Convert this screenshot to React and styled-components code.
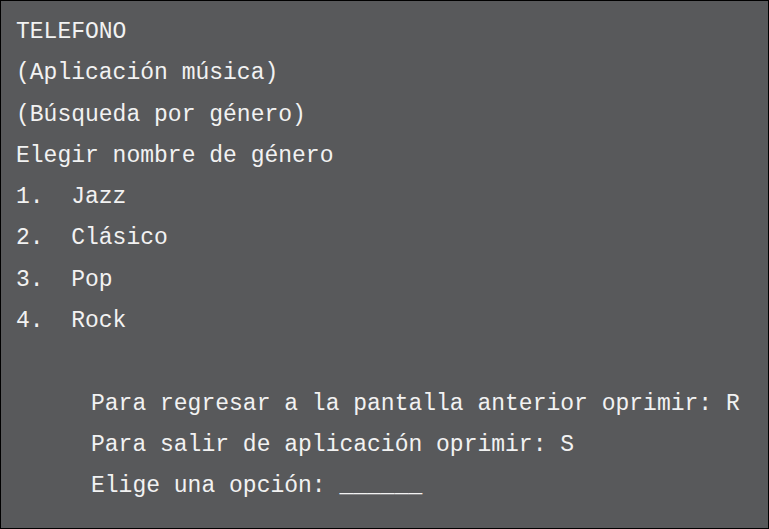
import styled, { createGlobalStyle } from 'styled-components'

const GlobalStyle = createGlobalStyle`
  html, body {
    margin: 0;
    padding: 0;
    background: #58595b;
  }
`

const Screen = styled.div`
  box-sizing: border-box;
  width: 769px;
  height: 529px;
  border: 1px solid #000;
  background: #58595b;
  padding: 11px 15px 0;
  display: flex;
  flex-direction: column;
  font-family: "Liberation Mono", "Courier New", monospace;
  font-size: 23px;
  line-height: 41.3px;
  color: #f2f2f2;
  overflow: hidden;
`

const Line = styled.div`
  white-space: pre;
  height: 41.3px;
  padding-left: ${(p) => (p.$indent ? '75px' : '0')};
`

const Blank = styled.div`
  height: 41.3px;
`

const Menu = styled.div`
  display: flex;
  flex-direction: column;
`

const header = ['TELEFONO', '(Aplicación música)', '(Búsqueda por género)', 'Elegir nombre de género']
const genres = ['Jazz', 'Clásico', 'Pop', 'Rock']
const footer = [
  'Para regresar a la pantalla anterior oprimir: R',
  'Para salir de aplicación oprimir: S',
  'Elige una opción: ______',
]

export default function App() {
  return (
    <>
      <GlobalStyle />
      <Screen>
        {header.map((t) => (
          <Line key={t}>{t}</Line>
        ))}
        <Menu>
          {genres.map((g, i) => (
            <Line key={g}>{`${i + 1}.  ${g}`}</Line>
          ))}
        </Menu>
        <Blank />
        {footer.map((t) => (
          <Line key={t} $indent>{t}</Line>
        ))}
      </Screen>
    </>
  )
}
